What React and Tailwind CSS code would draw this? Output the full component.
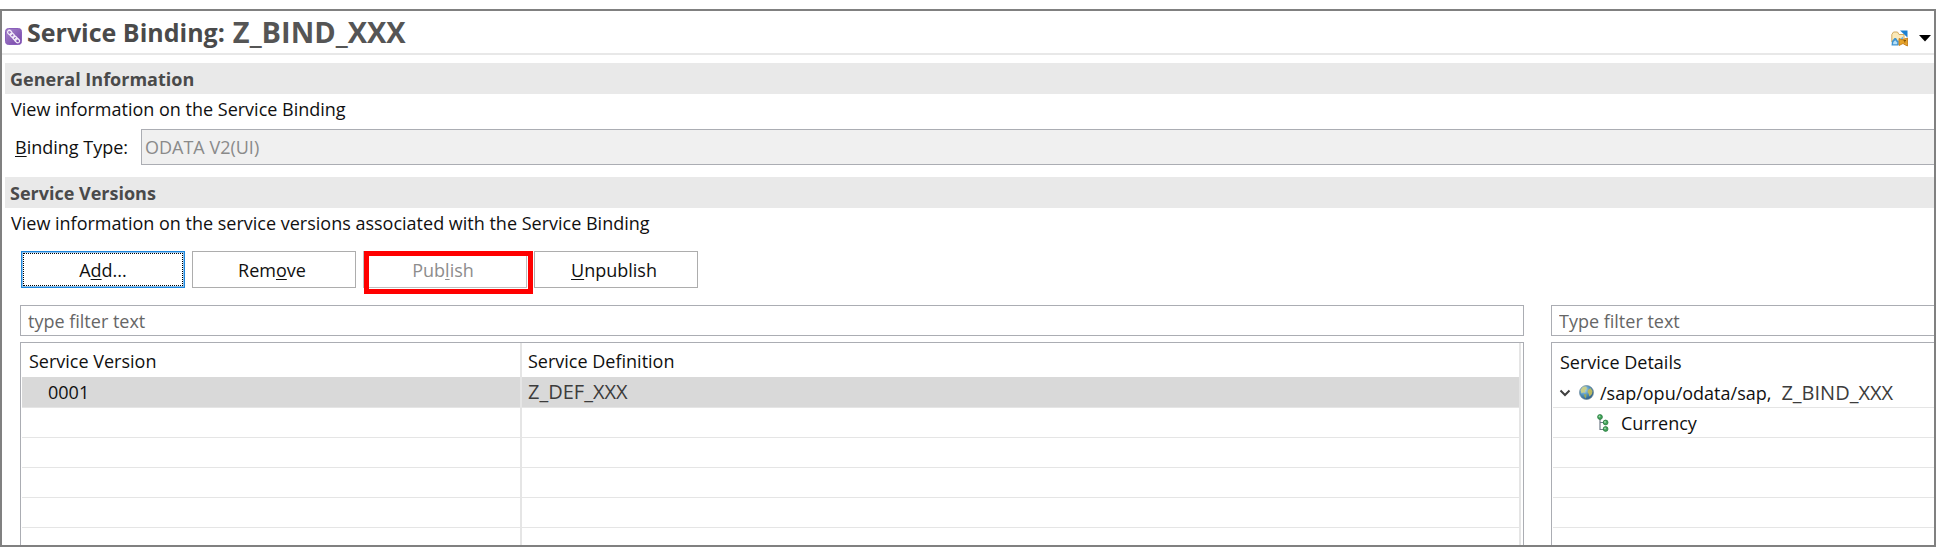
import React from "react";

function BindingIcon() {
  return (
    <svg width="17" height="17" viewBox="0 0 17 17" className="shrink-0" aria-hidden="true">
      <defs>
        <linearGradient id="bind" x1="0" y1="0" x2="1" y2="1">
          <stop offset="0" stopColor="#a88acb" />
          <stop offset="1" stopColor="#7440a8" />
        </linearGradient>
      </defs>
      <rect x="0.5" y="0.5" width="16" height="16" rx="3" fill="url(#bind)" stroke="#8a5fbb" />
      <g fill="none" stroke="#f4eefa" strokeWidth="1.2">
        <ellipse cx="4.8" cy="4.6" rx="2.5" ry="1.9" transform="rotate(45 4.8 4.6)" />
        <ellipse cx="7.4" cy="7.4" rx="2.4" ry="1.7" transform="rotate(45 7.4 7.4)" />
        <ellipse cx="9.9" cy="10" rx="2.4" ry="1.7" transform="rotate(45 9.9 10)" />
        <ellipse cx="12.3" cy="12.6" rx="2.5" ry="1.9" transform="rotate(45 12.3 12.6)" />
      </g>
    </svg>
  );
}

function FolderIcon() {
  return (
    <svg width="17" height="17" viewBox="0 0 17 17" aria-hidden="true">
      <path d="M0.8 12 V4.5 L2.5 2 H6.5 L8 4.5 H13 V12 Z" fill="#fbe9b8" stroke="#d2ab60" />
      <path d="M0.5 15.5 L1 11 L3.5 8 H5 L7 11 V15.5 Z" fill="#3f93d0" />
      <path d="M2 14.2 L2.4 12 L4.2 10.2 L6.2 12.4 V14.2 Z" fill="#b7e0f6" />
      <path d="M7 11 L12 6.5 V12 L7 15.5 Z" fill="#6db4e2" />
      <path d="M9 0.5 H16.5 V7.5 Z" fill="#1b7fcf" />
      <path d="M8 8.5 L11 9.8 L16.5 8 V16 L14 14.8 L12 13.5 L8 15.5 Z" fill="#e6a32a" stroke="#bd7410" strokeWidth="0.8" />
      <path d="M12.5 10.5 H15 M13.8 10.5 V12.5" stroke="#8d5606" fill="none" />
    </svg>
  );
}

function GlobeIcon() {
  return (
    <svg width="15" height="15" viewBox="0 0 15 15" className="shrink-0" aria-hidden="true">
      <defs>
        <radialGradient id="globe" cx="0.35" cy="0.3" r="0.75">
          <stop offset="0" stopColor="#b9dcee" />
          <stop offset="0.55" stopColor="#4c8fbd" />
          <stop offset="1" stopColor="#2b587f" />
        </radialGradient>
      </defs>
      <circle cx="7.5" cy="7.5" r="7" fill="url(#globe)" stroke="#6b8798" strokeWidth="0.7" />
      <path d="M1.5 5 L4 1.8 L7 1.5 L8 3.5 L6 5.5 L6.5 7.5 L4 7.5 L2.5 8.5 Z" fill="#c9cf8a" />
      <path d="M9 5 L11.5 3 L13.5 6 L13 9 L10.5 11.5 L9.5 8.5 L8.5 7 Z" fill="#b9b860" />
      <path d="M5 9 L7.5 9.5 L7 13.5 L5.5 12 Z" fill="#9aa95c" />
    </svg>
  );
}

function EntityIcon() {
  return (
    <svg width="12" height="18" viewBox="0 0 12 18" className="shrink-0" aria-hidden="true">
      <path d="M3 4 V15.5 H7 M3 8.5 H7" fill="none" stroke="#6e7a86" strokeWidth="1.2" />
      <g fill="#43a35a" stroke="#257a3c" strokeWidth="0.8">
        <circle cx="3" cy="3" r="2.4" />
        <circle cx="8.6" cy="8.5" r="2.4" />
        <circle cx="8.6" cy="15" r="2.4" />
      </g>
      <g fill="#a5deb0">
        <circle cx="2.5" cy="2.4" r="0.9" />
        <circle cx="8" cy="7.9" r="0.9" />
        <circle cx="8" cy="14.4" r="0.9" />
      </g>
    </svg>
  );
}

function SectionTitle({ children }) {
  return (
    <h2 className="ml-[3px] flex h-[31px] items-center bg-[#e9e9e9] pl-[5px] text-lg font-bold text-[#4a4a4a]">
      {children}
    </h2>
  );
}

const buttonBase = "h-[37px] w-[164px] border bg-white pr-1 text-center";

export default function App() {
  return (
    <div className="flex h-screen flex-col bg-white pt-[9px] font-['Open_Sans','Noto_Sans',sans-serif] text-lg leading-6 text-[#101010]">
      <main className="flex min-h-0 flex-1 flex-col overflow-hidden border-2 border-[#808080]">
        <header className="flex h-11 shrink-0 items-center border-b-2 border-[#e8e8e8] pr-0.5 pl-[3px]">
          <div className="pt-2">
            <BindingIcon />
          </div>
          <h1 className="flex flex-1 items-center gap-2 pl-[5px] text-[25px] font-bold text-[#4a4a4a]">
            <span>Service Binding:</span>
            <span className="text-[29px] text-[#555555]">Z_BIND_XXX</span>
          </h1>
          <div className="flex items-center gap-2.5 pt-3">
            <button type="button" aria-label="Open">
              <FolderIcon />
            </button>
            <button type="button" aria-label="Menu">
              <svg width="14" height="8" viewBox="0 0 14 8" aria-hidden="true">
                <path d="M1 1 H13 L7 7.5 Z" fill="#000" />
              </svg>
            </button>
          </div>
        </header>

        <section className="shrink-0 pt-2">
          <SectionTitle>General Information</SectionTitle>
          <p className="pt-[3px] pl-[9px]">View information on the Service Binding</p>
          <div className="flex items-center pt-2 pl-[13px]">
            <label htmlFor="type" className="w-[126px]">
              <u className="underline-offset-2">B</u>inding Type:
            </label>
            <input
              id="type"
              disabled
              defaultValue="ODATA V2(UI)"
              className="h-9 min-w-0 flex-1 border border-r-0 border-[#abadb3] bg-[#f0f0f0] pl-[3px] text-[#8a8a8a]"
            />
          </div>
        </section>

        <section className="flex min-h-0 flex-1 flex-col pt-3">
          <SectionTitle>Service Versions</SectionTitle>
          <p className="pt-[3px] pl-[9px]">
            View information on the service versions associated with the Service Binding
          </p>
          <div className="flex gap-[7px] pt-4 pl-[19px]">
            <button type="button" className="h-[37px] w-[164px] border border-[#1c86dc] bg-white text-center">
              <span className="flex h-full items-center justify-center border border-[#8fc3ee]">
                <span className="flex h-full w-full items-center justify-center border border-dotted border-black">
                  <span>A<u className="underline-offset-2">d</u>d...</span>
                </span>
              </span>
            </button>
            <button type="button" className={`${buttonBase} border-[#adadad]`}>
              Rem<u className="underline-offset-2">o</u>ve
            </button>
            <div className="relative">
              <button type="button" disabled className={`${buttonBase} border-[#bfbfbf] text-[#8d8d8d]`}>
                Pub<u className="underline-offset-2">l</u>ish
              </button>
              <span className="pointer-events-none absolute top-0 -right-1.5 -bottom-1.5 left-px border-5 border-[#ff0000]" />
            </div>
            <button type="button" className={`${buttonBase} border-[#adadad]`}>
              <u className="underline-offset-2">U</u>npublish
            </button>
          </div>

          <div className="flex min-h-0 flex-1 gap-[27px] pt-[17px] pl-[18px]">
            <div className="flex min-w-0 flex-1 flex-col gap-1.5">
              <input
                aria-label="Filter versions"
                placeholder="type filter text"
                className="h-[31px] shrink-0 border border-[#abadb3] px-[7px] placeholder:text-[#666666]"
              />
              <div className="min-h-0 flex-1 overflow-hidden border border-b-0 border-[#abadb3] pr-0.5 pl-px">
                <table className="w-full table-fixed border-collapse text-left">
                  <thead>
                    <tr className="h-[34px]">
                      <th className="w-[499px] border-r-2 border-[#e5e5e5] pt-0.5 pl-[7px] font-normal">Service Version</th>
                      <th className="border-r-2 border-[#e5e5e5] pt-0.5 pl-1.5 font-normal">Service Definition</th>
                    </tr>
                  </thead>
                  <tbody>
                    <tr className="h-[30px] bg-[#d9d9d9]">
                      <td className="border-r-2 border-b border-[#e5e5e5] pl-[26px]">0001</td>
                      <td className="border-r-2 border-b border-[#e5e5e5] pl-1.5 text-xl leading-6 text-[#3c3c3c]">Z_DEF_XXX</td>
                    </tr>
                    {[1, 2, 3, 4, 5].map((n) => (
                      <tr key={n} className="h-[30px]">
                        <td className="border-r-2 border-b border-[#e5e5e5]" />
                        <td className="border-r-2 border-b border-[#e5e5e5]" />
                      </tr>
                    ))}
                  </tbody>
                </table>
              </div>
            </div>

            <div className="flex w-[383px] flex-col gap-1.5">
              <input
                aria-label="Filter details"
                placeholder="Type filter text"
                className="h-[31px] shrink-0 border border-r-0 border-[#abadb3] px-[7px] placeholder:text-[#666666]"
              />
              <div className="min-h-0 flex-1 overflow-hidden border-t border-l border-[#abadb3] pl-px">
                <h3 className="flex h-[35px] items-center pt-0.5 pl-[7px]">Service Details</h3>
                <ul>
                  <li className="flex h-[30px] items-center border-b border-[#e5e5e5] pl-1.5">
                    <svg width="12" height="8" viewBox="0 0 12 8" className="shrink-0" aria-hidden="true">
                      <path d="M1.5 1.5 L6 6 L10.5 1.5" fill="none" stroke="#404040" strokeWidth="2" />
                    </svg>
                    <span className="pr-1.5 pl-2">
                      <GlobeIcon />
                    </span>
                    <span>/sap/opu/odata/sap,</span>
                    <span className="pl-2.5 text-xl leading-6 text-[#3c3c3c]">Z_BIND_XXX</span>
                  </li>
                  <li className="flex h-[30px] items-center gap-3 border-b border-[#e5e5e5] pl-11">
                    <EntityIcon />
                    <span>Currency</span>
                  </li>
                  {[1, 2, 3, 4].map((n) => (
                    <li key={n} className="h-[30px] border-b border-[#e5e5e5]" />
                  ))}
                </ul>
              </div>
            </div>
          </div>
        </section>
      </main>
    </div>
  );
}
